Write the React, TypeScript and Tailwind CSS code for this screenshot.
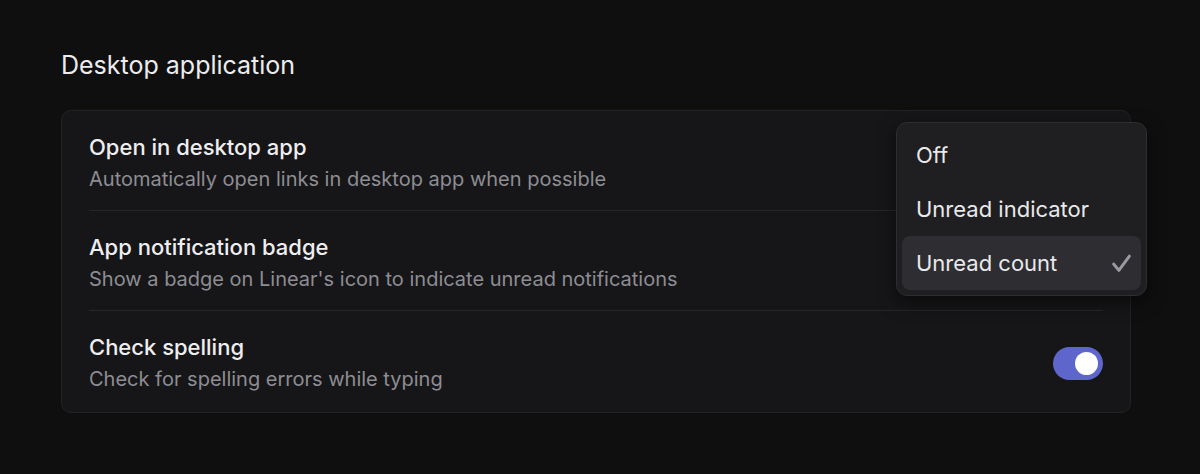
import { useState } from 'react';

type SettingRowProps = {
    title: string;
    description: string;
    last?: boolean;
    children?: React.ReactNode;
};

const SettingRow = ({ title, description, last, children }: SettingRowProps) => (
    <div className={last ? 'flex items-center justify-between pt-[22px] pb-[19px]' : 'flex items-center justify-between pt-[22px] pb-[17px] border-b border-[#27272b]'}>
        <div className="flex flex-col gap-[4px]">
            <div className="text-[22px] leading-[28px] font-medium text-[#eeeef0]">{title}</div>
            <div className="text-[20px] leading-[28px] text-[#8d8d93]">{description}</div>
        </div>
        {children}
    </div>
);

const Toggle = ({ on, onChange }: { on: boolean; onChange: () => void }) => (
    <button
        onClick={onChange}
        className={on ? 'flex items-center justify-end w-[50px] h-[33px] rounded-full bg-[#5e66cc] px-[5px]' : 'flex items-center justify-start w-[50px] h-[33px] rounded-full bg-[#3a3a40] px-[5px]'}
    >
        <span className="block w-[23px] h-[23px] rounded-full bg-white" />
    </button>
);

const options = ['Off', 'Unread indicator', 'Unread count'];

export default function App() {
    const [spelling, setSpelling] = useState(true);
    const [badge, setBadge] = useState('Unread count');

    return (
        <div className="min-h-[474px] bg-[#0f0f10] pl-[61px] pr-[69px] pt-[50px] font-['Inter',sans-serif]">
            <h2 className="text-[25px] leading-[30px] text-[#ececee] mb-[30px]">Desktop application</h2>
            <div className="relative rounded-[10px] border border-[#232327] bg-[#161618] px-[27px]">
                <SettingRow title="Open in desktop app" description="Automatically open links in desktop app when possible" />
                <SettingRow title="App notification badge" description="Show a badge on Linear's icon to indicate unread notifications" />
                <SettingRow title="Check spelling" description="Check for spelling errors while typing" last>
                    <Toggle on={spelling} onChange={() => setSpelling(!spelling)} />
                </SettingRow>

                <div className="absolute top-[11px] right-[-17px] w-[251px] rounded-[11px] border border-[#2d2d32] bg-[#1f1f22] p-[5px] shadow-[0_6px_18px_rgba(0,0,0,0.55)]">
                    {options.map((option) => (
                        <button
                            key={option}
                            onClick={() => setBadge(option)}
                            className={option === badge ? 'flex w-full items-center justify-between h-[54px] rounded-[8px] bg-[#2d2d32] pl-[14px] pr-[9px] text-[22px] text-[#e9e9eb]' : 'flex w-full items-center justify-between h-[54px] rounded-[8px] pl-[14px] pr-[9px] text-[22px] text-[#e9e9eb]'}
                        >
                            <span>{option}</span>
                            {option === badge && (
                                <svg width="21" height="21" viewBox="0 0 20 20" fill="none">
                                    <path d="M2.5 10.5 L7.5 16.5 L17.5 3" stroke="#9a9aa0" strokeWidth="2.8" strokeLinecap="round" strokeLinejoin="round" />
                                </svg>
                            )}
                        </button>
                    ))}
                </div>
            </div>
        </div>
    );
}
